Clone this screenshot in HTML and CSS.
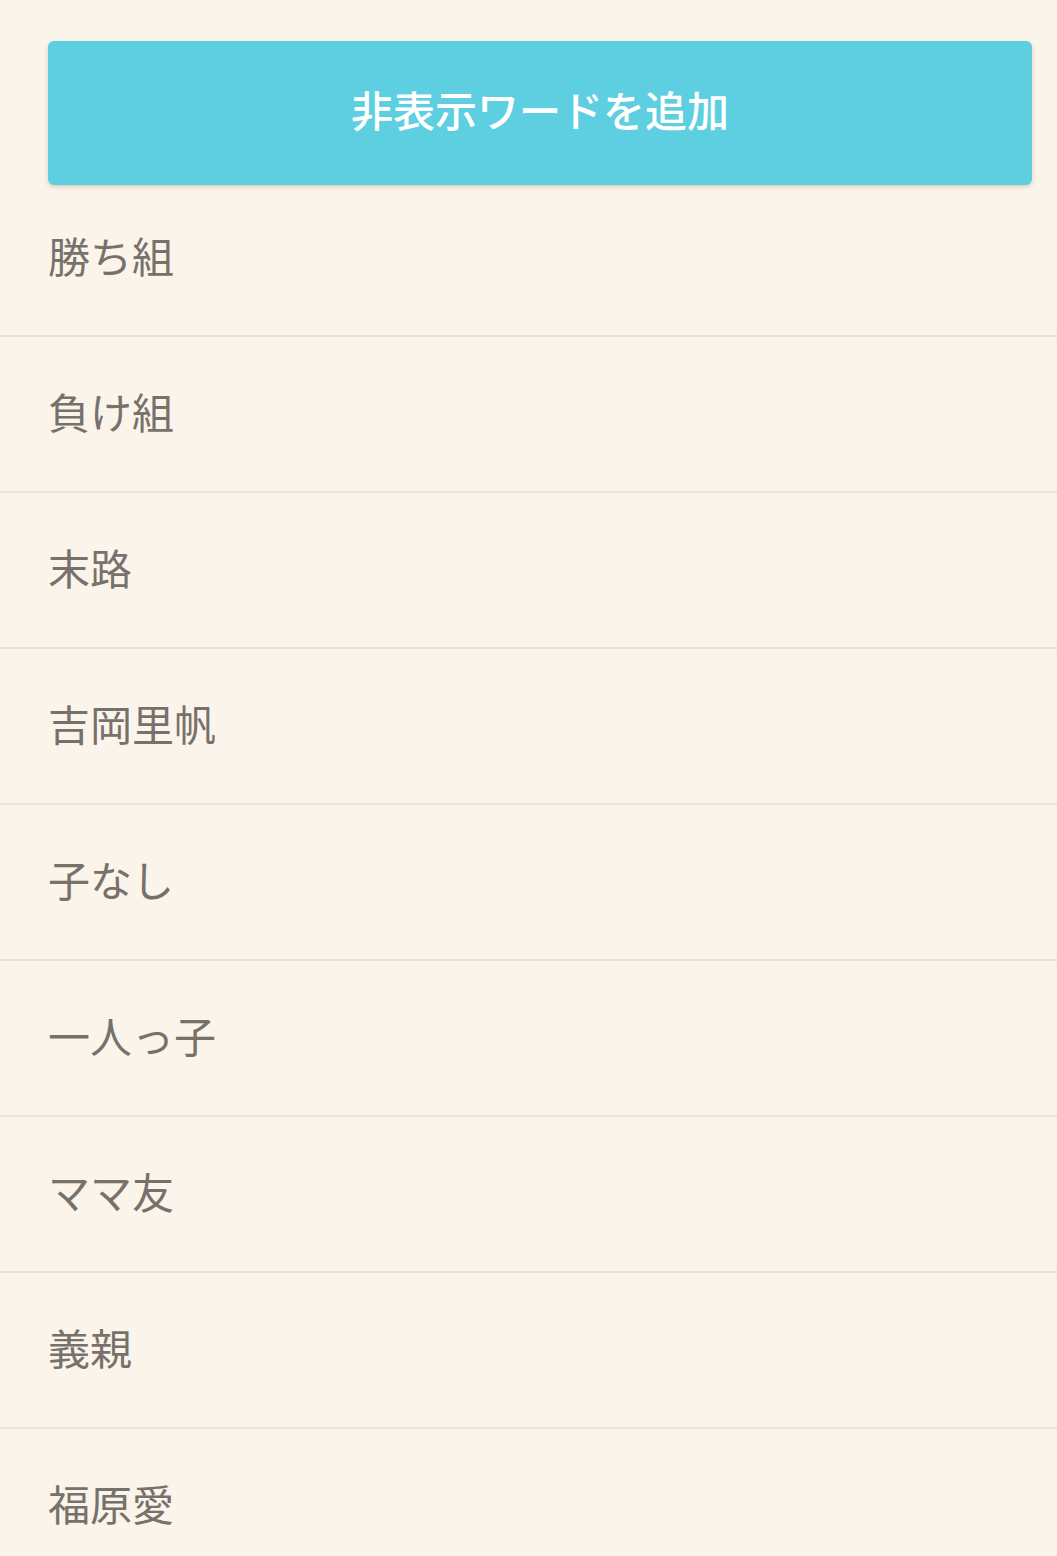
FILE: index.html
```html
<!DOCTYPE html>
<html lang="ja">
<head>
<meta charset="utf-8">
<link rel="stylesheet" href="styles.css">
</head>
<body>
<div class="page">
  <button class="add-btn">非表示ワードを追加</button>
  <ul class="word-list">
    <li class="word">勝ち組</li>
    <li class="word">負け組</li>
    <li class="word">末路</li>
    <li class="word">吉岡里帆</li>
    <li class="word">子なし</li>
    <li class="word">一人っ子</li>
    <li class="word">ママ友</li>
    <li class="word">義親</li>
    <li class="word">福原愛</li>
  </ul>
</div>
</body>
</html>
```

FILE: styles.css
```css
html, body {
  margin: 0;
  padding: 0;
  background: #fbf4ea;
}
.page {
  font-family: "Noto Sans CJK JP", "Noto Sans", sans-serif;
  padding-top: 41px;
  min-height: 1556px;
  box-sizing: border-box;
}
.add-btn {
  display: block;
  box-sizing: border-box;
  width: 984px;
  height: 144px;
  margin: 0 0 0 48px;
  border: none;
  border-radius: 6px;
  background: #5ecfe0;
  color: #ffffff;
  font-family: inherit;
  font-size: 42px;
  font-weight: 500;
  line-height: 1;
  box-shadow: 0 2px 4px rgba(120, 100, 80, 0.25);
  padding: 0 0 8px 0;
}
.word-list {
  list-style: none;
  margin: -4px 0 0 0;
  padding: 0;
}
.word {
  display: flex;
  align-items: center;
  height: 148px;
  padding: 0 0 6px 48px;
  border-bottom: 2px solid #e9e3d9;
  color: #77716c;
  font-size: 42px;
  line-height: 1;
}
.word:last-child {
  border-bottom: none;
}
```
